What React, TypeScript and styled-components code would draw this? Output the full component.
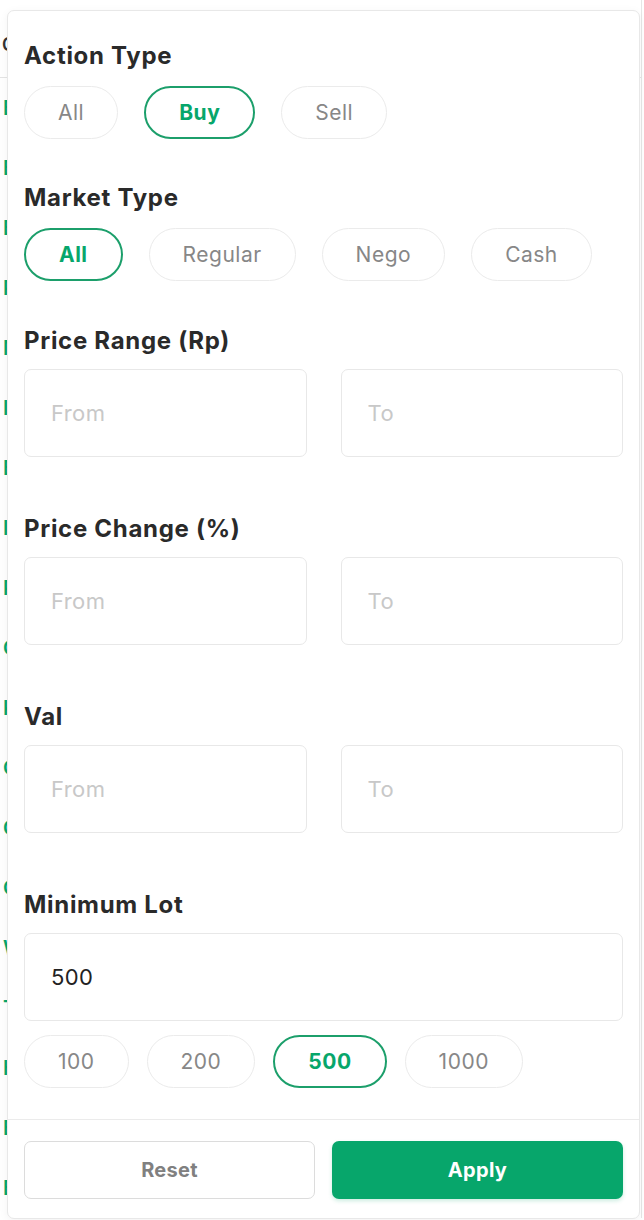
import React, { useState } from 'react';
import styled, { createGlobalStyle } from 'styled-components';

const GlobalStyle = createGlobalStyle`
  html, body {
    margin: 0;
    padding: 0;
    background: #ffffff;
  }
  body {
    font-family: Inter, "Noto Sans", "Liberation Sans", sans-serif;
    -webkit-font-smoothing: antialiased;
  }
  * {
    box-sizing: border-box;
  }
`;

const GREEN = '#07a66b';

// list behind the popover, only the first letter of each code peeks out
const tickers = [
  'BBRI', 'BMRI', 'BBNI', 'PGAS', 'MDKA', 'INDF', 'BUMI', 'ITMG', 'PTBA', 'CPIN',
  'KLBF', 'GOTO', 'CTRA', 'GGRM', 'WIKA', 'TLKM', 'HRUM', 'ELSA', 'BRIS',
];

export default function App() {
  const [action, setAction] = useState('Buy');
  const [market, setMarket] = useState('All');
  const [lot, setLot] = useState('500');

  return (
    <>
      <GlobalStyle />
      <S.Page>
        <S.Table>
          <S.HeadRow>
            <S.HeadCell>C</S.HeadCell>
          </S.HeadRow>
          {tickers.map((t) => (
            <S.Row key={t}>
              <S.Ticker title={t}>{t.charAt(0)}</S.Ticker>
            </S.Row>
          ))}
        </S.Table>

        <S.Panel>
          <S.Body>
            <S.Section $space={43}>
              <S.Title>Action Type</S.Title>
              <S.Chips $gap={26}>
                {['All', 'Buy', 'Sell'].map((o) => (
                  <S.Chip key={o} $active={action === o} onClick={() => setAction(o)}>
                    {o}
                  </S.Chip>
                ))}
              </S.Chips>
            </S.Section>

            <S.Section $space={44}>
              <S.Title>Market Type</S.Title>
              <S.Chips $gap={26}>
                {['All', 'Regular', 'Nego', 'Cash'].map((o) => (
                  <S.Chip key={o} $active={market === o} onClick={() => setMarket(o)}>
                    {o}
                  </S.Chip>
                ))}
              </S.Chips>
            </S.Section>

            <S.Section $space={56}>
              <S.Title>Price Range (Rp)</S.Title>
              <S.Pair>
                <S.Input placeholder="From" />
                <S.Input placeholder="To" />
              </S.Pair>
            </S.Section>

            <S.Section $space={56}>
              <S.Title>Price Change (%)</S.Title>
              <S.Pair>
                <S.Input placeholder="From" />
                <S.Input placeholder="To" />
              </S.Pair>
            </S.Section>

            <S.Section $space={56}>
              <S.Title>Val</S.Title>
              <S.Pair>
                <S.Input placeholder="From" />
                <S.Input placeholder="To" />
              </S.Pair>
            </S.Section>

            <S.Section $space={0}>
              <S.Title>Minimum Lot</S.Title>
              <S.Input value={lot} onChange={(e) => setLot(e.target.value)} />
              <S.Chips $gap={18} $top={14}>
                {['100', '200', '500', '1000'].map((o) => (
                  <S.Chip key={o} $active={lot === o} onClick={() => setLot(o)}>
                    {o}
                  </S.Chip>
                ))}
              </S.Chips>
            </S.Section>
          </S.Body>

          <S.Footer>
            <S.ResetButton onClick={() => { setAction('All'); setMarket('All'); setLot(''); }}>
              Reset
            </S.ResetButton>
            <S.ApplyButton>Apply</S.ApplyButton>
          </S.Footer>
        </S.Panel>
      </S.Page>
    </>
  );
}

const S = {
  Page: styled.div`
    position: relative;
    width: 644px;
    height: 1220px;
    overflow: hidden;
    background: #ffffff;
  `,
  Table: styled.div`
    display: flex;
    flex-direction: column;
    width: 642px;
    border-right: 1px solid #e6e6e6;
  `,
  HeadRow: styled.div`
    display: flex;
    align-items: center;
    height: 78px;
    border-bottom: 1px solid #e4e4e4;
  `,
  HeadCell: styled.div`
    padding-left: 2px;
    margin-top: 12px;
    font-size: 18px;
    font-weight: 600;
    color: #333;
  `,
  Row: styled.div`
    display: flex;
    align-items: center;
    height: 60px;
    &:first-of-type {
      margin-top: 3px;
    }
  `,
  Ticker: styled.div`
    padding-left: 3px;
    font-size: 20px;
    font-weight: 600;
    color: ${GREEN};
  `,
  Panel: styled.div`
    position: absolute;
    top: 10px;
    left: 7px;
    width: 633px;
    height: 1209px;
    display: flex;
    flex-direction: column;
    background: #ffffff;
    border: 1px solid #e8e8e8;
    border-radius: 7px;
    box-shadow: 0 2px 10px rgba(0, 0, 0, 0.05);
  `,
  Body: styled.div`
    flex: 1;
    display: flex;
    flex-direction: column;
    padding: 29px 16px 0;
  `,
  Section: styled.div<{ $space: number }>`
    display: flex;
    flex-direction: column;
    margin-bottom: ${(p) => p.$space}px;
  `,
  Title: styled.div`
    height: 31px;
    line-height: 31px;
    margin-bottom: 13px;
    font-size: 24px;
    font-weight: 700;
    letter-spacing: 0.7px;
    color: #2a2a2a;
  `,
  Chips: styled.div<{ $gap: number; $top?: number }>`
    display: flex;
    gap: ${(p) => p.$gap}px;
    margin-top: ${(p) => p.$top ?? 2}px;
  `,
  Chip: styled.button<{ $active?: boolean }>`
    height: 53px;
    padding: 0 33px;
    border-radius: 27px;
    background: #ffffff;
    border: ${(p) => (p.$active ? `2px solid #1c9f6b` : '1.5px solid #ebebeb')};
    color: ${(p) => (p.$active ? GREEN : '#878787')};
    font-family: inherit;
    font-size: 21px;
    font-weight: ${(p) => (p.$active ? 700 : 400)};
    letter-spacing: 0.5px;
    cursor: pointer;
  `,
  Pair: styled.div`
    display: grid;
    grid-template-columns: 1fr 1fr;
    gap: 34px;
  `,
  Input: styled.input`
    width: 100%;
    height: 88px;
    padding: 0 26px;
    border: 1.5px solid #e8e8e8;
    border-radius: 7px;
    outline: none;
    font-family: inherit;
    font-size: 22px;
    letter-spacing: 0.4px;
    color: #222;
    background: #ffffff;
    &::placeholder {
      color: #c8c8c8;
    }
  `,
  Footer: styled.div`
    display: grid;
    grid-template-columns: 1fr 1fr;
    gap: 17px;
    padding: 21px 16px 19px;
    border-top: 1px solid #ebebeb;
  `,
  ResetButton: styled.button`
    height: 58px;
    border: 1.5px solid #dcdcdc;
    border-radius: 7px;
    background: #ffffff;
    color: #808080;
    font-family: inherit;
    font-size: 20px;
    font-weight: 700;
    letter-spacing: 0.3px;
    cursor: pointer;
  `,
  ApplyButton: styled.button`
    height: 58px;
    border: none;
    border-radius: 7px;
    background: ${GREEN};
    color: #ffffff;
    font-family: inherit;
    font-size: 20px;
    font-weight: 700;
    letter-spacing: 0.3px;
    box-shadow: 0 2px 4px rgba(7, 166, 107, 0.2);
    cursor: pointer;
  `,
};
